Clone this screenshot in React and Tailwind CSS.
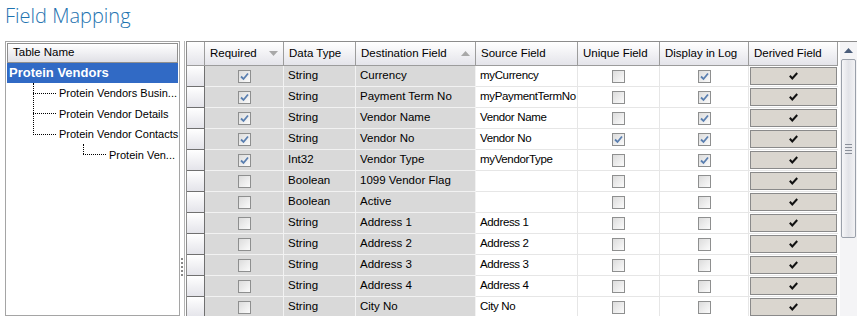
import React from "react";

const rows = [
  { req: true, type: "String", dest: "Currency", src: "myCurrency", uniq: false, log: true },
  { req: true, type: "String", dest: "Payment Term No", src: "myPaymentTermNo", uniq: false, log: true },
  { req: true, type: "String", dest: "Vendor Name", src: "Vendor Name", uniq: false, log: true },
  { req: true, type: "String", dest: "Vendor No", src: "Vendor No", uniq: true, log: true },
  { req: true, type: "Int32", dest: "Vendor Type", src: "myVendorType", uniq: false, log: true },
  { req: false, type: "Boolean", dest: "1099 Vendor Flag", src: "", uniq: false, log: false },
  { req: false, type: "Boolean", dest: "Active", src: "", uniq: false, log: false },
  { req: false, type: "String", dest: "Address 1", src: "Address 1", uniq: false, log: false },
  { req: false, type: "String", dest: "Address 2", src: "Address 2", uniq: false, log: false },
  { req: false, type: "String", dest: "Address 3", src: "Address 3", uniq: false, log: false },
  { req: false, type: "String", dest: "Address 4", src: "Address 4", uniq: false, log: false },
  { req: false, type: "String", dest: "City No", src: "City No", uniq: false, log: false },
];

function Check({ on }) {
  return (
    <div className="w-[13px] h-[13px] border border-[#8e8f8f] bg-gradient-to-br from-[#dcdcdc] to-[#fbfbfb] flex items-center justify-center">
      {on && (
        <svg width="9" height="9" viewBox="0 0 9 9">
          <path d="M1 4.5 L3.5 7 L8 1.5" fill="none" stroke="#5a7fb0" strokeWidth="1.8" />
        </svg>
      )}
    </div>
  );
}

function Tick() {
  return (
    <svg width="9" height="8" viewBox="0 0 9 8">
      <path d="M0.8 3.8 L3.3 6.5 L8.2 1" fill="none" stroke="#111" strokeWidth="2" />
    </svg>
  );
}

const head = "h-[24px] flex items-center px-[5px] border-r border-b border-[#9c9c9c] bg-gradient-to-b from-white to-[#e4e4ea] whitespace-nowrap overflow-hidden";
const gray = "h-[21px] flex items-center px-[4px] border-r border-b border-[#f2f2f2] bg-[#d9d9d9] whitespace-nowrap overflow-hidden";
const white = "h-[21px] flex items-center px-[4px] border-r border-b border-[#e6e6e6] bg-white whitespace-nowrap overflow-hidden";

export default function App() {
  return (
    <div className="w-[857px] h-[316px] overflow-hidden bg-white text-[11.5px] text-black" style={{ fontFamily: '"Liberation Sans", Tahoma, sans-serif' }}>
      <div className="h-[41px] pl-[5px] pt-[1px] text-[20px] font-light text-[#1e73b0]" style={{ fontFamily: '"Open Sans", sans-serif' }}>
        Field Mapping
      </div>
      <div className="flex h-[275px]">
        <div className="ml-[5px] w-[176px] border border-[#a5a5a5] p-[1px]">
          <div className="h-[20px] flex items-center px-[5px] border border-[#8f8f8f] bg-gradient-to-b from-white to-[#e0e0e6]">Table Name</div>
          <div className="h-[20px] flex items-center px-[2px] bg-[#316ac5] text-white font-bold text-[13px]">Protein Vendors</div>
          <div className="relative text-[11px]">
            <div className="absolute left-[26px] top-0 h-[50px] border-l border-dotted border-black" />
            <div className="absolute left-[76px] top-[61px] h-[10px] border-l border-dotted border-black" />
            {[
              { t: "Protein Vendors Busin...", l: 26, w: 23 },
              { t: "Protein Vendor Details", l: 26, w: 23 },
              { t: "Protein Vendor Contacts", l: 26, w: 23 },
              { t: "Protein Ven...", l: 76, w: 23 },
            ].map((n, i) => (
              <div key={i} className="h-[20.5px] flex items-center">
                <div className="shrink-0" style={{ width: n.l }} />
                <div className="shrink-0 border-t border-dotted border-black" style={{ width: n.w }} />
                <span className="ml-[3px] whitespace-nowrap">{n.t}</span>
              </div>
            ))}
          </div>
        </div>
        <div className="w-[5px] flex items-end justify-center pb-[40px] border-r border-[#b5b5b5]">
          <div className="flex flex-col gap-[2px]">
            {[0, 1, 2, 3, 4].map((i) => (
              <div key={i} className="w-[2px] h-[2px] bg-[#888]" />
            ))}
          </div>
        </div>
        <div className="flex flex-1 border-l border-t border-[#8c8c8c] ml-[1px]">
          <div className="grid grid-cols-[18px_79px_72px_120px_102px_82px_89px_89px] content-start">
            <div className={head}></div>
            <div className={head + " justify-between"}>
              <span>Required</span>
              <svg width="9" height="5" viewBox="0 0 9 5"><path d="M0 0 H9 L4.5 5 Z" fill="#a8a8a8" /></svg>
            </div>
            <div className={head}>Data Type</div>
            <div className={head + " justify-between"}>
              <span>Destination Field</span>
              <svg width="9" height="5" viewBox="0 0 9 5"><path d="M0 5 H9 L4.5 0 Z" fill="#a8a8a8" /></svg>
            </div>
            <div className={head}>Source Field</div>
            <div className={head}>Unique Field</div>
            <div className={head}>Display in Log</div>
            <div className={head}>Derived Field</div>
            {rows.map((r, i) => (
              <React.Fragment key={i}>
                <div className="h-[21px] border-r border-b border-[#707070] bg-gradient-to-b from-white to-[#e4e4ea]" />
                <div className={gray + " justify-center"}><Check on={r.req} /></div>
                <div className={gray}>{r.type}</div>
                <div className={gray}>{r.dest}</div>
                <div className={white + " tracking-[-0.35px]"}>{r.src}</div>
                <div className={white + " justify-center"}><Check on={r.uniq} /></div>
                <div className={white + " justify-center"}><Check on={r.log} /></div>
                <div className="h-[21px] p-[1px] border-b border-[#e6e6e6] bg-white">
                  <div className="h-full border border-[#8a8a8a] bg-[#dad6cf] flex items-center justify-center">
                    <Tick />
                  </div>
                </div>
              </React.Fragment>
            ))}
          </div>
          <div className="ml-[2px] w-[17px] flex flex-col bg-[#f4f4f6]">
            <div className="h-[17px] flex items-center justify-center">
              <svg width="9" height="5" viewBox="0 0 9 5"><path d="M0 5 H9 L4.5 0 Z" fill="#4a5d7a" /></svg>
            </div>
            <div className="mx-[1px] h-[179px] border border-[#9aa0aa] rounded-[2px] bg-gradient-to-r from-[#f6f6f8] via-[#e2e3e8] to-[#f2f2f4] flex flex-col items-center justify-center gap-[2px]">
              {[0, 1, 2, 3].map((i) => (
                <div key={i} className="w-[7px] h-[1px] bg-[#8a8f99]" />
              ))}
            </div>
          </div>
        </div>
      </div>
    </div>
  );
}
